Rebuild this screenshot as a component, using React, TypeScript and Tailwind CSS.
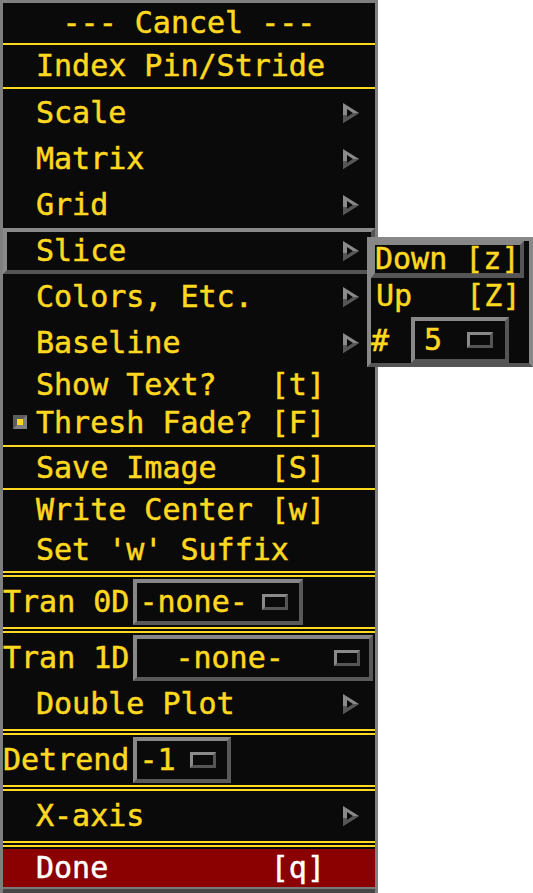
const YELLOW = "text-[#ffd820]";

function Arrow() {
  return (
    <svg width="16" height="20" viewBox="0 0 16 20" className="shrink-0">
      <polygon points="0,0 16,10 0,20" fill="#8a8a8a" />
      <polygon points="0,12 4,12 4,14 10,10 16,10 0,20" fill="#555555" />
      <polygon points="4,6 10,10 4,14" fill="#0a0a0a" />
    </svg>
  );
}

function Indicator() {
  return (
    <div className="h-[16px] w-[26px] shrink-0 border-[3px] border-t-[#8a8a8a] border-l-[#8a8a8a] border-b-[#555555] border-r-[#555555] bg-[#0a0a0a]" />
  );
}

function Sep() {
  return <div className="h-[2px] bg-[#ffd820]" />;
}

function DoubleSep() {
  return (
    <div className="flex h-[6px] flex-col justify-between">
      <div className="h-[2px] bg-[#ffd820]" />
      <div className="h-[2px] bg-[#ffd820]" />
    </div>
  );
}

function CascadeRow({
  label,
  h,
  active,
}: {
  label: string;
  h: string;
  active?: boolean;
}) {
  return (
    <div
      className={`flex ${h} items-center justify-between border-4 pl-[29px] pr-[12px] ${
        active
          ? "border-t-[#8a8a8a] border-l-[#8a8a8a] border-b-[#555555] border-r-[#555555]"
          : "border-transparent"
      }`}
    >
      <span>{label}</span>
      <Arrow />
    </div>
  );
}

function OptionRow({
  label,
  value,
  boxClass,
  textPad,
  gap,
  rowH,
}: {
  label: string;
  value: string;
  boxClass: string;
  textPad: string;
  gap: string;
  rowH: string;
}) {
  return (
    <div className={`flex ${rowH} items-start pt-[2px]`}>
      <div className="flex h-[46px] items-center">{label}</div>
      <div
        className={`ml-[4px] flex h-[46px] items-center border-4 border-t-[#878787] border-l-[#878787] border-b-[#595959] border-r-[#595959] ${boxClass}`}
      >
        <span className={textPad}>{value}</span>
        <div className={gap}>
          <Indicator />
        </div>
      </div>
    </div>
  );
}

export default function App() {
  return (
    <div className="relative h-[893px] w-[533px] overflow-hidden bg-white font-['DejaVu_Sans_Mono',monospace] text-[30px] leading-none [-webkit-text-stroke:0.5px_currentColor]">
      {/* main popup menu */}
      <div
        className={`flex w-[378px] flex-col border-x-[3px] border-t-[3px] border-[#7f7f7f] bg-[#0a0a0a] ${YELLOW}`}
      >
        <div className="flex h-[40px] items-center justify-center whitespace-pre">
          --- Cancel ---
        </div>
        <Sep />
        <div className="flex h-[42px] items-center pl-[33px]">
          Index Pin/Stride
        </div>
        <Sep />
        <div className="h-[1px]" />
        <CascadeRow label="Scale" h="h-[46px]" />
        <CascadeRow label="Matrix" h="h-[46px]" />
        <CascadeRow label="Grid" h="h-[46px]" />
        <CascadeRow label="Slice" h="h-[46px]" active />
        <CascadeRow label="Colors, Etc." h="h-[46px]" />
        <CascadeRow label="Baseline" h="h-[46px]" />

        <div className="flex h-[38px] items-center whitespace-pre pl-[33px]">
          Show Text?   [t]
        </div>
        <div className="relative flex h-[38px] items-center whitespace-pre pl-[33px]">
          <div className="absolute left-[10px] top-[11px] flex h-[14px] w-[14px] items-center justify-center border-4 border-t-[#5c5c5c] border-l-[#5c5c5c] border-b-[#808080] border-r-[#808080] bg-[#ffd820]" />
          Thresh Fade? [F]
        </div>
        <div className="h-[3px]" />
        <Sep />
        <div className="flex h-[41px] items-center whitespace-pre pl-[33px]">
          Save Image   [S]
        </div>
        <Sep />
        <div className="flex h-[40px] items-center whitespace-pre pl-[33px]">
          Write Center [w]
        </div>
        <div className="flex h-[39px] items-center whitespace-pre pl-[33px]">
          Set 'w' Suffix
        </div>
        <div className="h-[2px]" />
        <DoubleSep />

        <OptionRow
          label="Tran 0D"
          value="-none-"
          rowH="h-[50px]"
          boxClass="w-[170px]"
          textPad="pl-[2px]"
          gap="ml-[14px]"
        />
        <DoubleSep />
        <OptionRow
          label="Tran 1D"
          value="-none-"
          rowH="h-[48px]"
          boxClass="w-[240px]"
          textPad="pl-[38px]"
          gap="ml-[50px]"
        />
        <CascadeRow label="Double Plot" h="h-[46px]" />
        <div className="h-[2px]" />
        <DoubleSep />
        <OptionRow
          label="Detrend"
          value="-1"
          rowH="h-[50px]"
          boxClass="w-[98px]"
          textPad="pl-[2px]"
          gap="ml-[14px]"
        />
        <DoubleSep />
        <CascadeRow label="X-axis" h="h-[50px]" />
        <DoubleSep />
        <div className="h-[2px]" />
        <div className="flex h-[38px] items-center whitespace-pre bg-[#8b0000] pl-[33px] text-white">
          Done         [q]
        </div>
        <div className="h-[2px] bg-[#7a7a7a]" />
        <div className="h-[4px] bg-[#474747]" />
      </div>

      {/* Slice cascade submenu */}
      <div
        className={`absolute left-[367px] top-[237px] flex h-[130px] w-[166px] flex-col border-4 border-t-[#888888] border-l-[#888888] border-r-[#888888] border-b-[#555555] bg-[#0a0a0a] ${YELLOW}`}
      >
        <div className="mr-[5px] flex h-[37px] items-center whitespace-pre border-t-4 border-l-4 border-r-4 border-b-[5px] border-t-[#888888] border-l-[#888888] border-b-[#555555] border-r-[#555555]">
          Down [z]
        </div>
        <div className="flex h-[36px] items-center whitespace-pre pl-[5px]">
          Up   [Z]
        </div>
        <div className="flex flex-1 items-center">
          <span className="pt-[4px]">#</span>
          <div className="ml-[22px] mt-[3px] flex h-[46px] w-[98px] items-center border-4 border-t-[#888888] border-l-[#888888] border-b-[#555555] border-r-[#555555]">
            <span className="pl-[9px]">5</span>
            <div className="ml-[25px]">
              <Indicator />
            </div>
          </div>
        </div>
      </div>
    </div>
  );
}
